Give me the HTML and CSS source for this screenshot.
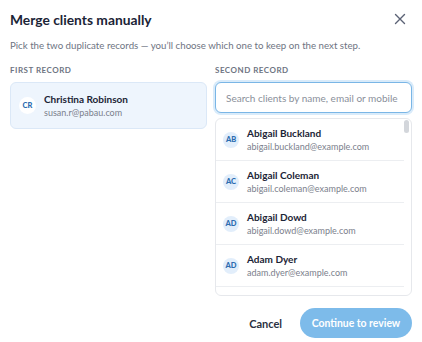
FILE: index.html
```html
<!doctype html>
<html lang="en">

<head>
  <meta charset="utf-8">
  <title>Merge clients manually</title>
  <link rel="stylesheet" href="styles.css">
</head>

<body>
  <div class="dialog">
    <header class="head">
      <h1>Merge clients manually</h1>
      <button class="close" aria-label="Close">
        <svg width="12" height="12" viewBox="0 0 12 12"><path d="M1.5 1.5l9 9M10.5 1.5l-9 9" stroke="#5b6275" stroke-width="1.4" stroke-linecap="round"/></svg>
      </button>
    </header>
    <p class="lead">Pick the two duplicate records — you’ll choose which one to keep on the next step.</p>

    <div class="cols">
      <section class="col">
        <h2 class="label">First record</h2>
        <div class="picked">
          <span class="avatar avatar-white">CR</span>
          <div>
            <div class="name">Christina Robinson</div>
            <div class="email">susan.r@pabau.com</div>
          </div>
        </div>
      </section>

      <section class="col">
        <h2 class="label">Second record</h2>
        <input class="search" type="text" placeholder="Search clients by name, email or mobile">
        <div class="list">
          <ul class="items">
            <li><span class="avatar">AB</span><div><div class="name">Abigail Buckland</div><div class="email">abigail.buckland@example.com</div></div></li>
            <li><span class="avatar">AC</span><div><div class="name">Abigail Coleman</div><div class="email">abigail.coleman@example.com</div></div></li>
            <li><span class="avatar">AD</span><div><div class="name">Abigail Dowd</div><div class="email">abigail.dowd@example.com</div></div></li>
            <li><span class="avatar">AD</span><div><div class="name">Adam Dyer</div><div class="email">adam.dyer@example.com</div></div></li>
          </ul>
          <div class="scrollbar"><span class="thumb"></span></div>
        </div>
      </section>
    </div>

    <footer class="actions">
      <button class="btn-cancel">Cancel</button>
      <button class="btn-primary" disabled>Continue to review</button>
    </footer>
  </div>
</body>

</html>
```

FILE: styles.css
```css
html { background:#fff; }
body { margin:0; font-family:Lato,"Noto Sans",sans-serif; color:#1b2436; }
.dialog { width:402px; padding:9px 10px 0; }
.head { display:flex; align-items:center; justify-content:space-between; height:20px; }
h1 { margin:0; font-size:13.8px; font-weight:700; }
.close { border:0; background:none; padding:0; margin-right:6px; width:12px; height:12px; display:flex; }
.lead { margin:9px 0 0; font-size:9.7px; color:#6e7482; line-height:14px; }

.cols { display:grid; grid-template-columns:1fr 1fr; gap:8px; margin-top:12px; }
.label { margin:0 0 6px; font-size:8px; font-weight:700; text-transform:uppercase; letter-spacing:0.5px; color:#6e7482; line-height:12px; }

.picked { display:flex; align-items:center; gap:8px; height:45px; padding:0 8px; background:#eef5fd; border:1px solid #dbe8f7; border-radius:6px; }
.avatar { flex:none; width:16px; height:16px; border-radius:50%; background:#e2eefb; color:#2c6cb0; font-size:7.5px; font-weight:900; display:flex; align-items:center; justify-content:center; }
.avatar-white { background:#fff; width:17px; height:17px; }
.name { font-size:10px; font-weight:700; line-height:14px; color:#1b2436; }
.email { font-size:9px; color:#7b808c; line-height:14px; }

.search { box-sizing:border-box; width:100%; height:31px; padding:0 10px; border:1px solid #7ab6e6; border-radius:6px; box-shadow:0 0 0 2px #d9ebfa; font:inherit; font-size:10px; outline:none; }
.search::placeholder { color:#8a8f9a; }

.list { display:flex; margin-top:5px; height:176px; border:1px solid #e6e8ec; border-radius:6px; overflow:hidden; }
.items { flex:1; list-style:none; margin:0; padding:0; }
.items li { display:flex; align-items:center; gap:8px; height:41px; padding:0 7px; border-bottom:1px solid #eceef1; }
.scrollbar { width:7px; padding:1px 0; }
.thumb { display:block; width:5px; height:13px; border-radius:3px; background:#d3d6db; }

.actions { display:flex; justify-content:flex-end; align-items:center; gap:18px; margin-top:12px; }
.btn-cancel { border:0; background:none; font:inherit; font-size:11px; font-weight:700; color:#2a3142; padding:0; }
.btn-primary { border:0; border-radius:15px; height:30px; width:112px; background:#7dbbea; color:#fff; font:inherit; font-size:10.4px; font-weight:700; }
```
